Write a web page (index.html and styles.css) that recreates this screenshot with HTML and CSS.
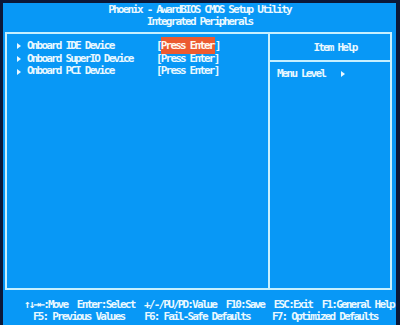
FILE: index.html
```html
<!DOCTYPE html>
<html>
<head>
<meta charset="utf-8">
<link rel="stylesheet" href="styles.css">
</head>
<body>
<div class="screen">
  <div class="title">
    <div class="tline">Phoenix - AwardBIOS CMOS Setup Utility</div>
    <div class="tline">Integrated Peripherals</div>
  </div>
  <div class="frame">
    <div class="items">
      <div class="row"><span class="tri"></span><span class="label">Onboard IDE Device</span><span class="val">[<span class="sel">Press Enter</span>]</span></div>
      <div class="row"><span class="tri"></span><span class="label">Onboard SuperIO Device</span><span class="val">[Press Enter]</span></div>
      <div class="row"><span class="tri"></span><span class="label">Onboard PCI Device</span><span class="val">[Press Enter]</span></div>
    </div>
    <div class="help">
      <div class="help-head">Item Help</div>
      <div class="help-body"><span class="ml">Menu Level</span><span class="tri"></span></div>
    </div>
  </div>
  <div class="footer">
    <div class="fline l1">↑↓→←:Move  Enter:Select  +/-/PU/PD:Value  F10:Save  ESC:Exit  F1:General Help</div>
    <div class="fline l2"><span class="f5">F5: Previous Values</span><span class="f6">F6: Fail-Safe Defaults</span><span class="f7">F7: Optimized Defaults</span></div>
  </div>
</div>
</body>
</html>
```
FILE: styles.css
```css
html, body {
  margin: 0;
  padding: 0;
  background: #0b1838;
  width: 400px;
  height: 325px;
  overflow: hidden;
}
.screen {
  margin: 3px 4px 0 3px;
  height: 322px;
  background: #0898f6;
  color: #eaf8ff;
  font-family: "DejaVu Sans Mono", monospace;
  font-weight: bold;
  font-size: 11px;
  letter-spacing: -1.82px;
  overflow: hidden;
}
.title {
  text-align: center;
  padding-top: 1px;
}
.tline {
  height: 12px;
  line-height: 12px;
}
.frame {
  box-sizing: border-box;
  margin: 4px 4px 0 2px;
  height: 258px;
  border: 2px solid #c6f0ff;
  display: grid;
  grid-template-columns: 263px 1fr;
}
.items {
  border-right: 2px solid #c6f0ff;
  padding: 6px 0 0 10px;
}
.row {
  height: 12.7px;
  line-height: 12.7px;
  display: flex;
  align-items: center;
  white-space: pre;
}
.tri {
  width: 0;
  height: 0;
  border-top: 3px solid transparent;
  border-bottom: 3px solid transparent;
  border-left: 4px solid #eaf8ff;
}
.label {
  margin-left: 6px;
  width: 129px;
}
.sel {
  background: #ec5a30;
  color: #fff8f0;
  padding: 2px 1px 2px 0;
}
.help-head {
  height: 26px;
  line-height: 28px;
  border-bottom: 2px solid #c6f0ff;
  text-align: center;
  padding-left: 10px;
}
.help-body {
  padding: 6px 0 0 7px;
  height: 12px;
  line-height: 12px;
  display: flex;
  align-items: center;
}
.ml {
  width: 64px;
}
.footer {
  margin-top: 9px;
}
.fline {
  height: 11.5px;
  line-height: 11.5px;
  overflow: hidden;
  white-space: pre;
}
.l1 {
  padding-left: 21px;
}
.l2 {
  display: flex;
}
.f5 { margin-left: 30px; }
.f6 { margin-left: 20px; }
.f7 { margin-left: 22px; }
```
